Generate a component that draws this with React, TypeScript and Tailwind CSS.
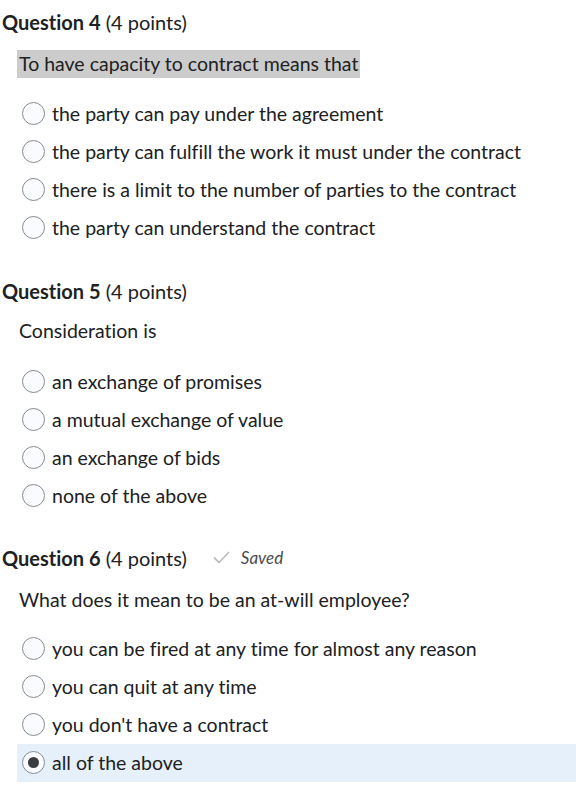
import React, { FC } from 'react'

type OptionProps = {
  label: string
  selected?: boolean
}

const Radio: FC<{ checked?: boolean }> = ({ checked }) => (
  <span className="flex h-[23px] w-[23px] shrink-0 items-center justify-center rounded-full border border-[#868b8f] bg-[#f9fbff]">
    {checked && <span className="h-[11px] w-[11px] rounded-full bg-[#3a3d40]" />}
  </span>
)

const Option: FC<OptionProps> = ({ label, selected }) => (
  <div className={`flex h-[38px] items-center gap-[7px] pl-[5px] ${selected ? 'bg-[#e6f0fb]' : ''}`}>
    <Radio checked={selected} />
    <span className="leading-none">{label}</span>
  </div>
)

type QuestionProps = {
  num: number
  prompt: string
  options: string[]
  selected?: number
  highlight?: boolean
  saved?: boolean
  promptGap?: string
  optionsGap?: string
}

const Question: FC<QuestionProps> = ({
  num,
  prompt,
  options,
  selected,
  highlight,
  saved,
  promptGap = 'mt-[15px]',
  optionsGap = 'mt-[16px]',
}) => (
  <section>
    <div className="flex h-[24px] items-center pl-[2px]">
      <h2 className="text-[20px] leading-none text-[#202122]">
        <span className="font-bold">Question {num}</span> <span>(4 points)</span>
      </h2>
      {saved && (
        <span className="ml-[26px] flex items-center gap-[11px] text-[#494c4e]">
          <svg width="17" height="13" viewBox="0 0 17 13" fill="none" stroke="#bcbfc2" strokeWidth={1.8} strokeLinecap="round">
            <polyline points="1.5 7 6 11.5 15.5 1.5" />
          </svg>
          <span className="text-[17px] italic">Saved</span>
        </span>
      )}
    </div>
    <div className={`${promptGap} pl-[17px]`}>
      <span className={`inline-block h-[28px] px-[2px] leading-[28px] ${highlight ? 'bg-[#cccccc]' : ''}`}>
        {prompt}
      </span>
    </div>
    <div className={`${optionsGap} pl-[17px]`}>
      {options.map((o, i) => (
        <Option key={o} label={o} selected={selected === i} />
      ))}
    </div>
  </section>
)

export default function App() {
  return (
    <div
      className="min-h-screen bg-white pt-[10px] text-[19.5px] text-[#202122] [font-variant-ligatures:none]"
      style={{ fontFamily: 'Lato, "Noto Sans", sans-serif' }}
    >
      <Question
        num={4}
        highlight
        prompt="To have capacity to contract means that"
        options={[
          'the party can pay under the agreement',
          'the party can fulfill the work it must under the contract',
          'there is a limit to the number of parties to the contract',
          'the party can understand the contract',
        ]}
      />
      <div className="h-[33px]" />
      <Question
        num={5}
        prompt="Consideration is"
        promptGap="mt-[13px]"
        optionsGap="mt-[17px]"
        options={['an exchange of promises', 'a mutual exchange of value', 'an exchange of bids', 'none of the above']}
      />
      <div className="h-[31px]" />
      <Question
        num={6}
        saved
        prompt="What does it mean to be an at-will employee?"
        selected={3}
        options={[
          'you can be fired at any time for almost any reason',
          'you can quit at any time',
          "you don't have a contract",
          'all of the above',
        ]}
      />
    </div>
  )
}
